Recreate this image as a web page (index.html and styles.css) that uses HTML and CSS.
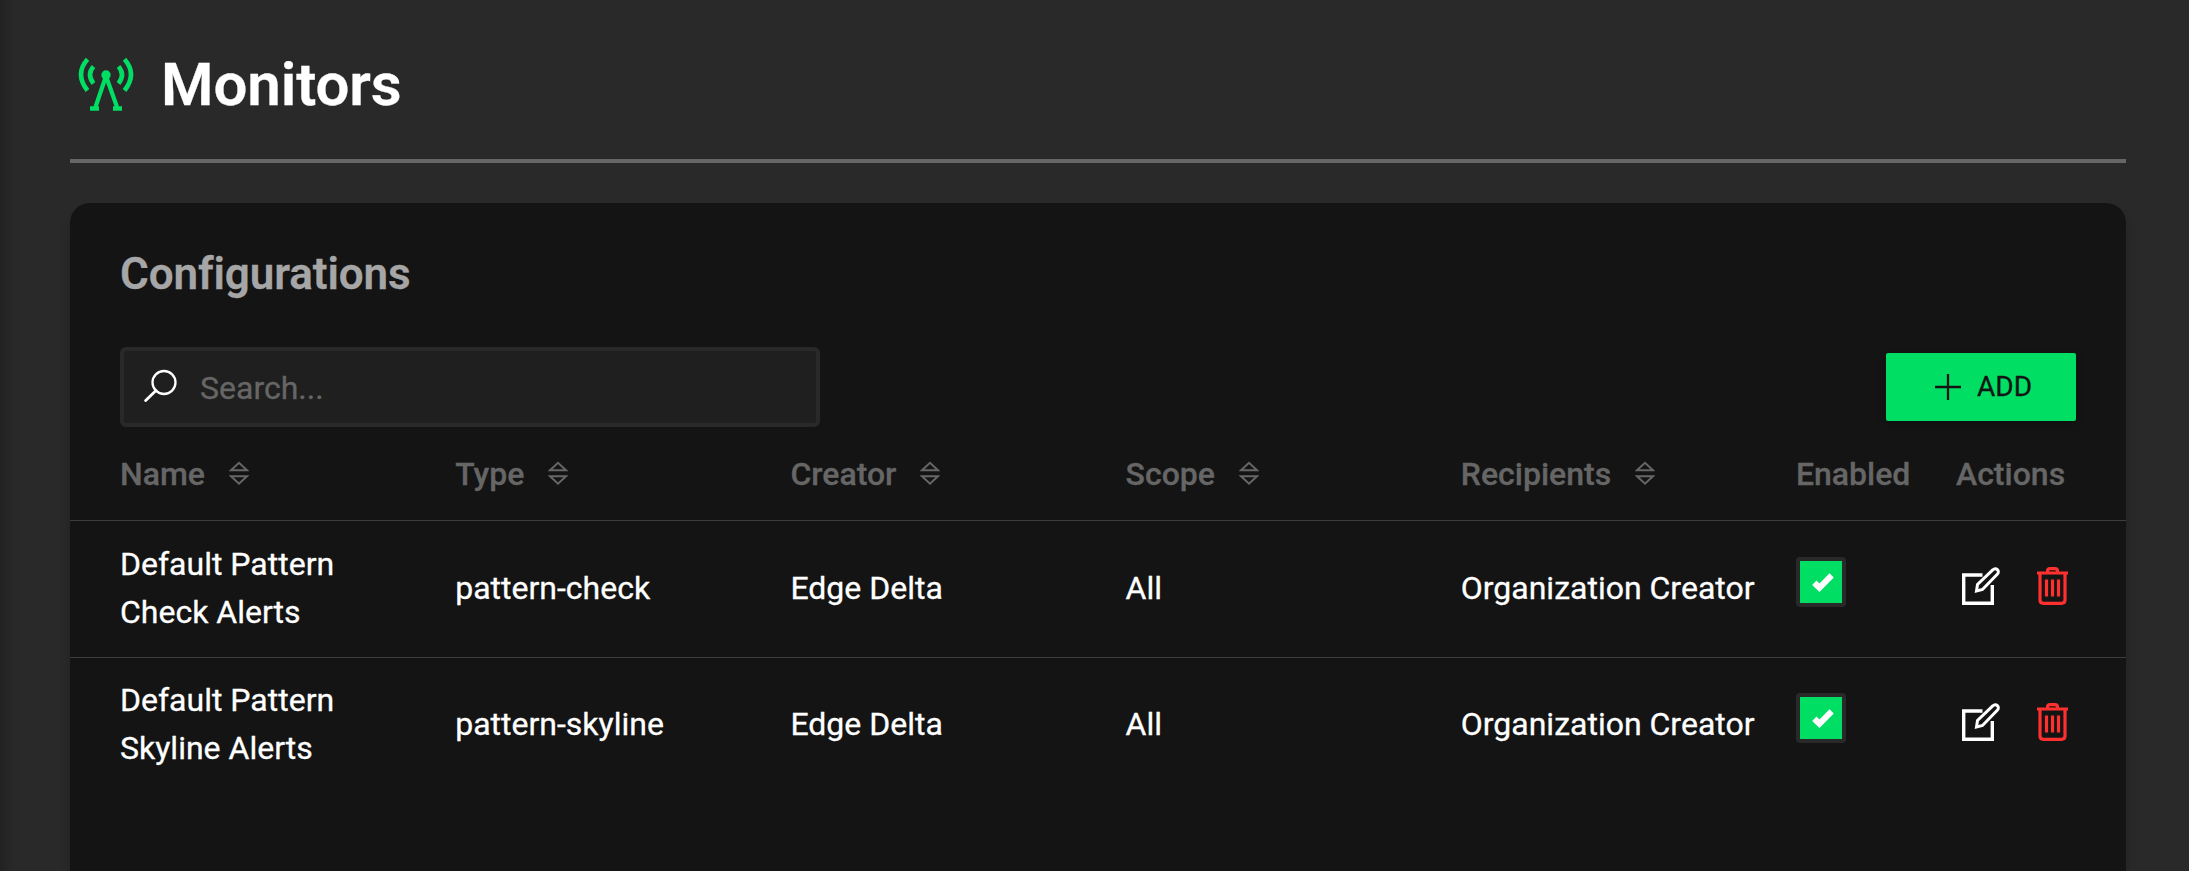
FILE: index.html
```html
<!DOCTYPE html>
<html lang="en">
<head>
<meta charset="utf-8">
<title>Monitors</title>
<link rel="stylesheet" href="styles.css">
</head>
<body>
<svg class="sprite" aria-hidden="true">
  <symbol id="sort" viewBox="0 0 20 25"><path d="M2 9.200 10 1.800 18 9.200ZM2 15.300 10 22.700 18 15.300Z" fill="none" stroke="currentColor" stroke-width="2"/></symbol>
  <symbol id="edit" viewBox="0 0 38 38"><path d="M20.500 8H1.700V36.300H30.300V18" fill="none" stroke="currentColor" stroke-width="3.400"/><path d="M14.500 24 15.500 17.500 31 2.700A3 3 0 0 1 35.500 7L20.500 22.500Z" fill="none" stroke="currentColor" stroke-width="3"/></symbol>
  <symbol id="trash" viewBox="0 0 32 38"><path d="M0 6H31M10.500 6V4Q10.500 1.700 13 1.700H18Q20.500 1.700 20.500 4V6M3 6V33Q3 36.300 6.500 36.300H24.500Q28 36.300 28 33V6M9.500 12.500V29.500M15.500 12.500V29.500M21.500 12.500V29.500" fill="none" stroke="currentColor" stroke-width="3.200"/></symbol>
  <symbol id="check" viewBox="0 0 42 42"><path d="M12.200 24 16.500 19.500 19.500 22.500 29.500 12.300 33.800 16.500 19.500 31Z" fill="currentColor"/></symbol>
</svg>
<main class="page">
  <header class="page-header">
    <svg class="antenna" viewBox="0 0 56 56" fill="none" stroke="currentColor" stroke-width="4.600"><circle cx="28" cy="19" r="4.700" fill="currentColor" stroke="none"/><path d="M28 20 17.500 51M28 20 39 51" stroke-width="4.200"/><path d="M12 52.500H21M35 52.500H44" stroke-width="4.600"/><path d="M15.500 10.500Q8.500 18.500 15.500 27.500M9.500 3.200Q-3.500 18 9.500 34.500M40.500 10.500Q47.500 18.500 40.500 27.500M46.500 3.200Q59.500 18 46.500 34.500"/></svg>
    <h1 class="title">Monitors</h1>
  </header>
  <section class="card">
    <h2 class="card-title">Configurations</h2>
    <div class="toolbar">
      <label class="search">
        <svg class="search-icon" viewBox="0 0 34 34" fill="none" stroke="currentColor" stroke-width="2.300" stroke-linecap="round"><circle cx="20" cy="13.500" r="11.500"/><path d="M12 21.500 1.700 31.500" stroke-width="2.800"/></svg>
        <input class="search-input" type="text" placeholder="Search...">
      </label>
      <button class="add" type="button"><svg class="plus" viewBox="0 0 26 26"><path d="M13 0V26M0 13H26" stroke="currentColor" stroke-width="2.300"/></svg>ADD</button>
    </div>
    <div class="table">
      <div class="row head">
        <span>Name<svg class="sort"><use href="#sort"/></svg></span>
        <span>Type<svg class="sort"><use href="#sort"/></svg></span>
        <span>Creator<svg class="sort"><use href="#sort"/></svg></span>
        <span>Scope<svg class="sort"><use href="#sort"/></svg></span>
        <span>Recipients<svg class="sort"><use href="#sort"/></svg></span>
        <span>Enabled</span>
        <span>Actions</span>
      </div>
      <div class="row">
        <span>Default Pattern<br>Check Alerts</span><span>pattern-check</span><span>Edge Delta</span><span>All</span><span>Organization Creator</span>
        <span class="checkbox"><svg class="tick"><use href="#check"/></svg></span>
        <span class="actions"><svg class="edit"><use href="#edit"/></svg><svg class="trash"><use href="#trash"/></svg></span>
      </div>
      <div class="row">
        <span>Default Pattern<br>Skyline Alerts</span><span>pattern-skyline</span><span>Edge Delta</span><span>All</span><span>Organization Creator</span>
        <span class="checkbox"><svg class="tick"><use href="#check"/></svg></span>
        <span class="actions"><svg class="edit"><use href="#edit"/></svg><svg class="trash"><use href="#trash"/></svg></span>
      </div>
    </div>
  </section>
</main>
</body>
</html>
```
FILE: styles.css
```css
* { box-sizing: border-box; }
body { margin: 0; height: 871px; overflow: hidden; background: #292929; color: #fff; font-family: Roboto, "Liberation Sans", sans-serif; font-size: 32px; line-height: 48px; -webkit-text-stroke: .3px currentColor; }
svg { display: block; flex: none; }
.sprite { position: absolute; width: 0; height: 0; }
.page { display: flex; flex-direction: column; height: 871px; padding: 0 63px 0 70px; background: linear-gradient(90deg, #222 0, #292929 14px); }
.page-header { display: flex; align-items: center; height: 163px; border-bottom: 4px solid #666; padding: 7px 0 0 8px; flex: none; }
.antenna { width: 56px; height: 56px; color: #00de64; margin-top: 2px; }
.title { margin: 4px 0 0 27px; font-size: 60px; font-weight: 600; line-height: 72px; letter-spacing: -.1px; }
.card { flex: 1; margin-top: 40px; border-radius: 20px 20px 0 0; background: #141414; box-shadow: 0 12px 12px rgba(0, 0, 0, .16); }
.card-title { margin: 0; padding: 39px 50px 0; font-size: 44px; line-height: 64px; font-weight: 600; letter-spacing: -.1px; color: #a6a6a6; }
.toolbar { display: flex; justify-content: space-between; align-items: center; height: 80px; margin: 41px 50px 0; }
.search { display: flex; align-items: center; width: 700px; height: 80px; border: 4px solid #292929; border-radius: 6px; background: #1f1f1f; padding-left: 20px; }
.search-icon { width: 34px; height: 34px; margin-bottom: 3px; }
.search-input { flex: 1; border: 0; outline: 0; padding: 1px 0 0; margin-left: 22px; background: transparent; font: inherit; color: #fff; }
.search-input::placeholder { color: #666; opacity: 1; }
.add { display: flex; align-items: center; justify-content: flex-start; width: 190px; height: 68px; padding: 0 0 0 49px; border: 0; border-radius: 2px; background: #00de64; color: #141414; font: 400 28px/32px Roboto, "Liberation Sans", sans-serif; box-shadow: 0 4px 8px rgba(0, 0, 0, .2); }
.plus { width: 26px; height: 26px; margin-right: 16px; }
.row { display: grid; grid-template-columns: repeat(5, 335.2px) 160px 1fr; align-items: center; height: 136px; padding-left: 50px; }
.row + .row { border-top: 1px solid #3d3d3d; height: 137px; padding-bottom: 2px; }
.row:last-child { padding-bottom: 4px; }
.head { height: 93px; font-weight: 500; color: #666; }
.head span { display: flex; align-items: center; white-space: nowrap; }
.sort { width: 20px; height: 25px; margin-left: 24px; }
.checkbox { width: 50px; height: 50px; margin-bottom: 12px; border: 4px solid #292929; border-radius: 4px; background: #00de64; }
.tick { width: 42px; height: 42px; }
.actions { display: flex; padding-left: 6px; margin-bottom: 4px; }
.edit { width: 38px; height: 38px; }
.trash { width: 32px; height: 38px; margin-left: 37px; color: #ff3030; }
```
